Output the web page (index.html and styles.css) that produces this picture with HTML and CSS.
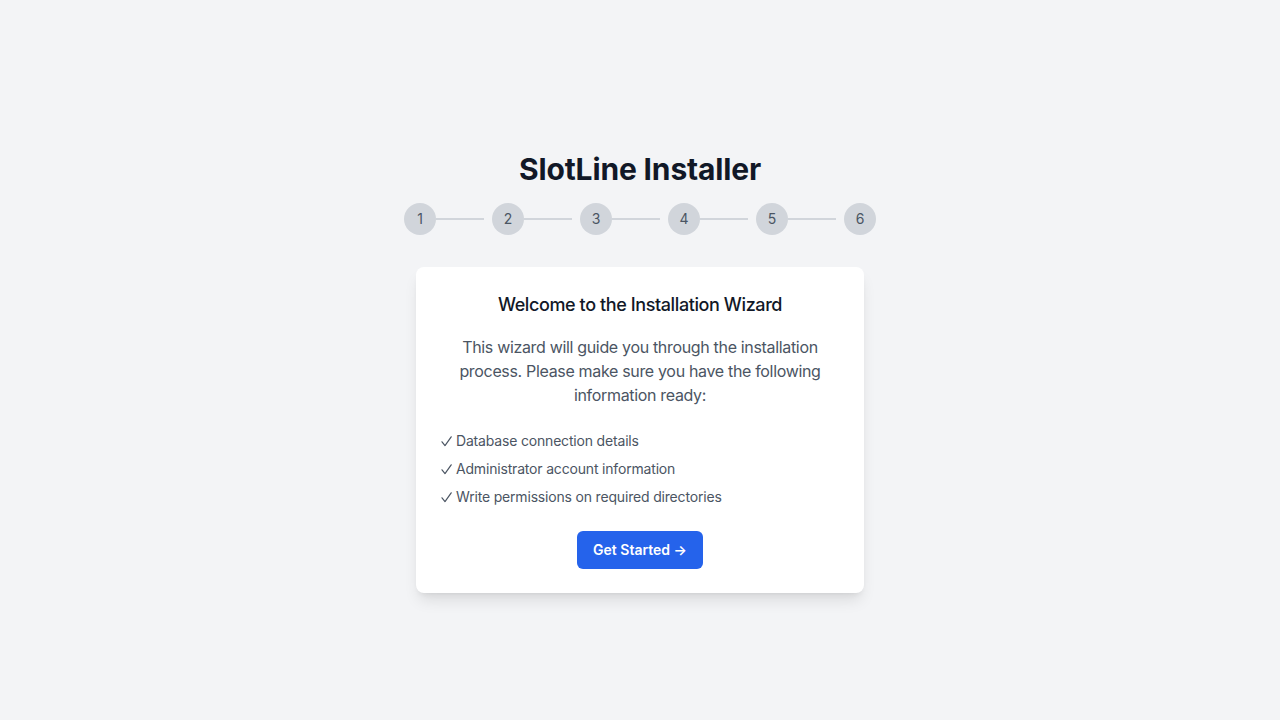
FILE: index.html
```html
<!DOCTYPE html>
<html lang="en">
<head>
<meta charset="utf-8">
<title>SlotLine Installer</title>
<link rel="stylesheet" href="styles.css">
</head>
<body>
<main class="wrap">
  <h1 class="title">SlotLine Installer</h1>
  <div class="steps">
    <div class="step"><span class="dot">1</span><span class="line"></span></div>
    <div class="step"><span class="dot">2</span><span class="line"></span></div>
    <div class="step"><span class="dot">3</span><span class="line"></span></div>
    <div class="step"><span class="dot">4</span><span class="line"></span></div>
    <div class="step"><span class="dot">5</span><span class="line"></span></div>
    <div class="step"><span class="dot">6</span></div>
  </div>
  <section class="card">
    <h2 class="card-title">Welcome to the Installation Wizard</h2>
    <p class="intro">This wizard will guide you through the installation process. Please make sure you have the following information ready:</p>
    <ul class="checks">
      <li><svg class="tick" viewBox="0 0 11 11" aria-hidden="true"><path d="M1 5.8 L4 9.6 L10.2 0.8"/></svg>Database connection details</li>
      <li><svg class="tick" viewBox="0 0 11 11" aria-hidden="true"><path d="M1 5.8 L4 9.6 L10.2 0.8"/></svg>Administrator account information</li>
      <li><svg class="tick" viewBox="0 0 11 11" aria-hidden="true"><path d="M1 5.8 L4 9.6 L10.2 0.8"/></svg>Write permissions on required directories</li>
    </ul>
    <div class="actions">
      <button class="btn" type="button">Get Started →</button>
    </div>
  </section>
</main>
</body>
</html>
```
FILE: styles.css
```css
* { box-sizing: border-box; }
html, body { margin: 0; padding: 0; }
body {
  background: #f3f4f6;
  font-family: Inter, "Noto Sans", "DejaVu Sans", sans-serif;
  color: #111827;
  min-height: 100vh;
}
.wrap {
  padding-top: 151px;
  display: flex;
  flex-direction: column;
  align-items: center;
}
.title {
  margin: 0 0 16px;
  font-size: 30px;
  line-height: 36px;
  font-weight: 700;
  letter-spacing: -0.15px;
  color: #111827;
}
.steps {
  display: flex;
  align-items: center;
  margin-bottom: 32px;
}
.step {
  display: flex;
  align-items: center;
}
.dot {
  width: 32px;
  height: 32px;
  border-radius: 50%;
  background: #d1d5db;
  color: #4b5563;
  font-size: 14px;
  line-height: 20px;
  display: flex;
  align-items: center;
  justify-content: center;
}
.line {
  width: 48px;
  height: 2px;
  background: #d1d5db;
  margin-right: 8px;
}
.card {
  width: 448px;
  background: #fff;
  border-radius: 8px;
  padding: 24px;
  box-shadow: 0 10px 15px -3px rgba(0,0,0,0.1), 0 4px 6px -4px rgba(0,0,0,0.1);
}
.card-title {
  margin: 0 0 16px;
  font-size: 18px;
  line-height: 28px;
  font-weight: 500;
  letter-spacing: -0.4px;
  text-align: center;
  color: #111827;
}
.intro {
  margin: 0 0 24px;
  font-size: 16px;
  line-height: 24px;
  letter-spacing: -0.33px;
  color: #4b5563;
  text-align: center;
}
.checks {
  list-style: none;
  margin: 0 0 24px;
  padding: 0;
  display: flex;
  flex-direction: column;
  gap: 8px;
}
.checks li {
  font-size: 14px;
  line-height: 20px;
  height: 20px;
  letter-spacing: -0.18px;
  color: #4b5563;
  display: flex;
  align-items: center;
}
.tick {
  width: 11px;
  height: 11px;
  margin: 0 4px 0 1px;
  flex: none;
  fill: none;
  stroke: #4b5563;
  stroke-width: 1.2;
  stroke-linecap: round;
  stroke-linejoin: round;
}
.actions {
  display: flex;
  justify-content: center;
}
.btn {
  font-family: inherit;
  background: #2563eb;
  color: #fff;
  border: 0;
  border-radius: 6px;
  padding: 9px 16px;
  font-size: 14px;
  line-height: 20px;
  font-weight: 600;
  cursor: pointer;
}
```
